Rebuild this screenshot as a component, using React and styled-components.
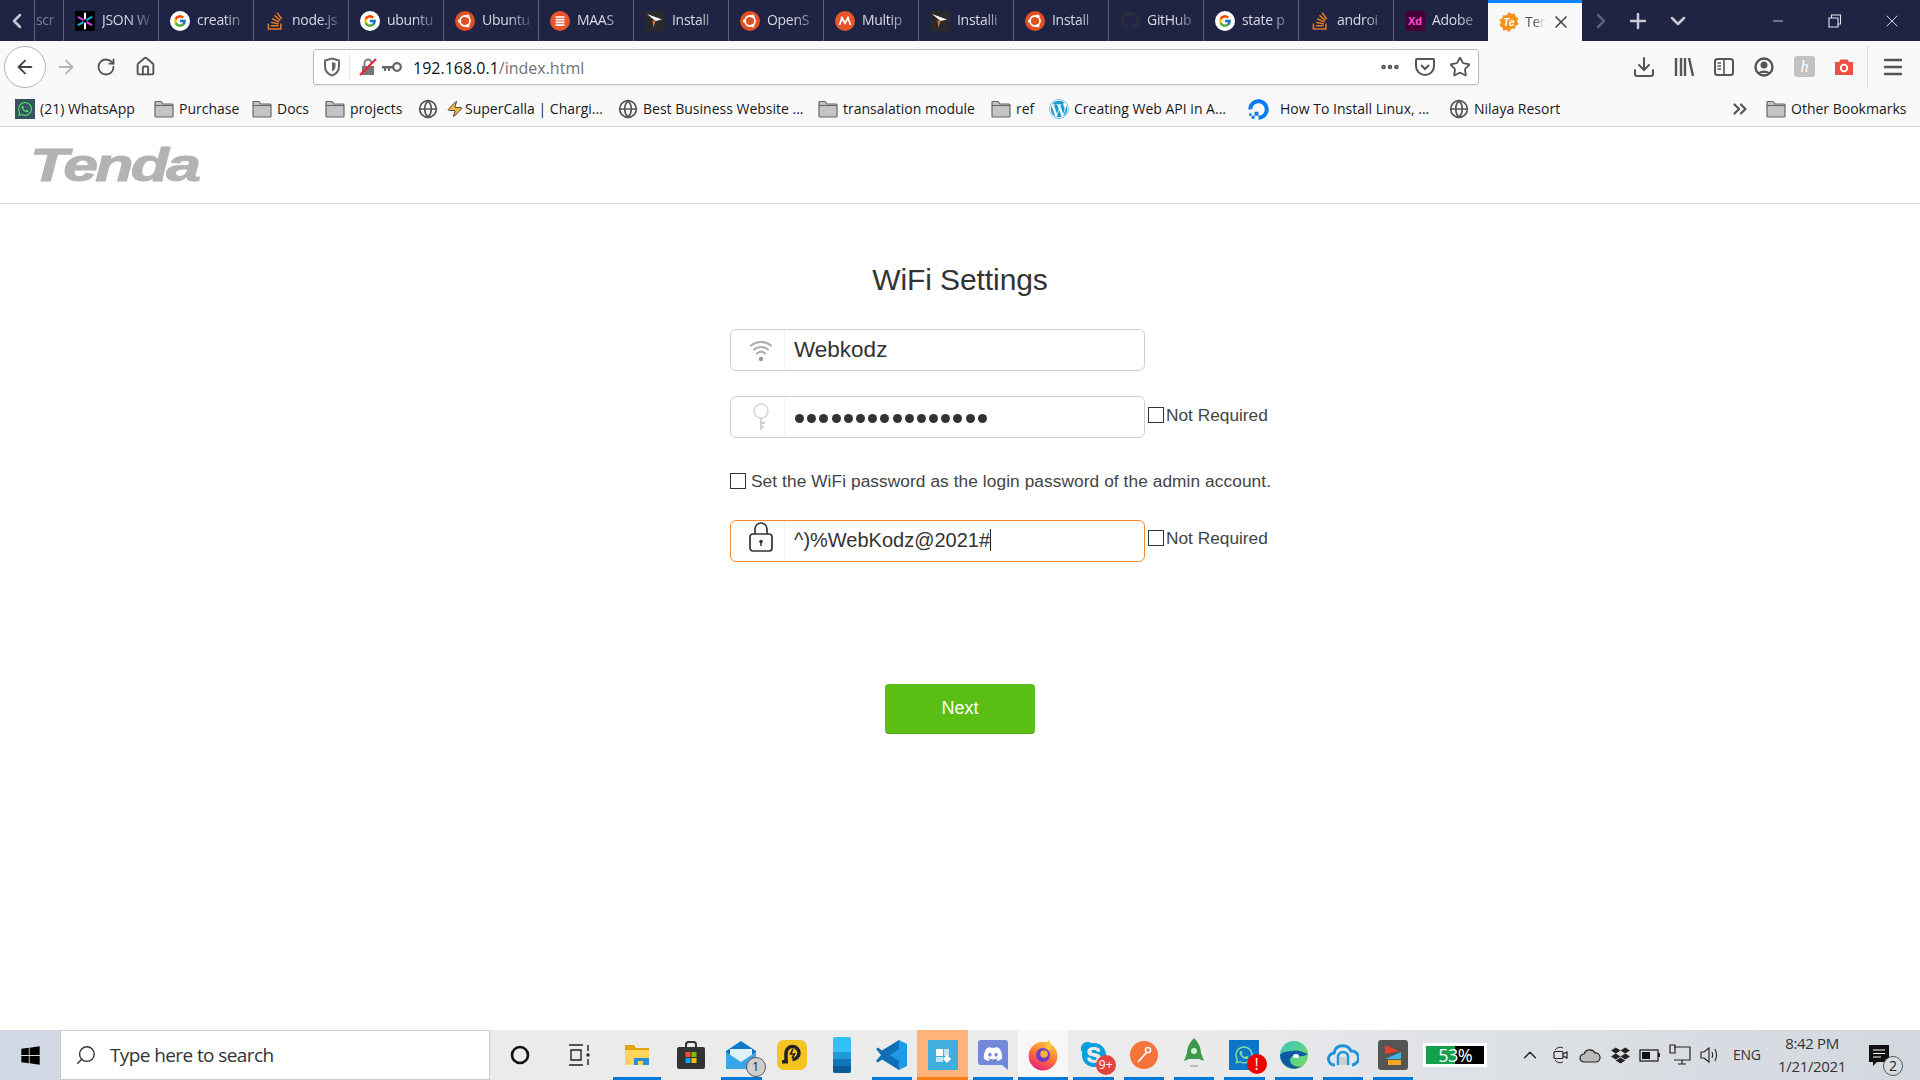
import React from 'react'
import styled, { createGlobalStyle } from 'styled-components'
import {
  ArrowLeft, ArrowRight, RotateCw, House, Star, Download, Menu, Plus, X, Minus,
  ChevronLeft, ChevronRight, ChevronDown, ChevronUp, ChevronsRight, Globe, Search, Ellipsis, Zap,
} from 'lucide-react'
import { FcGoogle } from 'react-icons/fc'
import { FaStackOverflow, FaGithub, FaWhatsapp, FaWordpress, FaDigitalOcean, FaWindows, FaDiscord, FaSkype, FaDropbox } from 'react-icons/fa'

const GlobalStyle = createGlobalStyle`
  html, body { margin: 0; padding: 0; background: #fff; overflow: hidden; }
  * { box-sizing: border-box; }
  #root { width: 1920px; height: 1080px; }
`

const ui = `"Open Sans", "Noto Sans", sans-serif`

const Screen = styled.div`
  width: 1920px;
  height: 1080px;
  display: flex;
  flex-direction: column;
  font-family: "Liberation Sans", Arial, sans-serif;
`

/* tab strip */
const TabStrip = styled.div`
  height: 41px;
  background: #1f2344;
  display: flex;
  align-items: stretch;
  flex-shrink: 0;
`
const StripButton = styled.div`
  width: ${p => p.$w}px;
  flex-shrink: 0;
  display: flex;
  align-items: center;
  justify-content: center;
  color: ${p => p.$color || '#c8c9d2'};
`
const Tab = styled.div`
  width: ${p => p.$w || 95}px;
  flex-shrink: 0;
  border-left: 1px solid #5d6078;
  padding-left: ${p => p.$pl ?? 11}px;
  display: flex;
  align-items: center;
  gap: 7px;
`
const TabText = styled.span`
  font: 14px/1.3 ${ui};
  letter-spacing: -0.3px;
  color: #d9dae2;
  white-space: nowrap;
  width: ${p => p.$w || 54}px;
  opacity: ${p => p.$dim || 1};
  -webkit-mask-image: linear-gradient(to right, #000 50%, rgba(0,0,0,0.15) 92%);
  mask-image: linear-gradient(to right, #000 50%, rgba(0,0,0,0.15) 92%);
`
const ActiveTab = styled.div`
  width: 94px;
  flex-shrink: 0;
  background: #f9f9fa;
  border-top: 3px solid #0a84ff;
  padding: 0 7px 0 11px;
  display: flex;
  align-items: center;
  gap: 6px;
`
const ActiveText = styled(TabText)`
  color: #555;
`
const WindowControls = styled.div`
  margin-left: auto;
  display: flex;
  align-items: stretch;
`
const WindowButton = styled.div`
  width: 57px;
  display: flex;
  align-items: center;
  justify-content: center;
  color: #e8e8ee;
`

/* nav bar */
const NavBar = styled.div`
  height: 51px;
  background: #f9f9fa;
  display: flex;
  align-items: center;
  flex-shrink: 0;
  padding-left: 4px;
`
const BackCircle = styled.div`
  width: 42px;
  height: 42px;
  border-radius: 50%;
  background: #fff;
  border: 1px solid #b4b4b4;
  display: flex;
  align-items: center;
  justify-content: center;
  color: #444;
  flex-shrink: 0;
`
const NavButton = styled.div`
  width: ${p => p.$w || 40}px;
  height: 36px;
  flex-shrink: 0;
  display: flex;
  align-items: center;
  justify-content: center;
  color: ${p => p.$color || '#555'};
`
const UrlBar = styled.div`
  width: 1166px;
  height: 36px;
  margin-left: ${p => p.$ml}px;
  background: #fff;
  border: 1px solid #bdbdbd;
  border-radius: 3px;
  box-shadow: 0 1px 2px rgba(0,0,0,0.08);
  display: flex;
  align-items: center;
  flex-shrink: 0;
`
const UrlSection = styled.div`
  width: 36px;
  height: 26px;
  border-right: 1px solid #e6e6e6;
  display: flex;
  align-items: center;
  justify-content: center;
  flex-shrink: 0;
`
const UrlIcons = styled.div`
  display: flex;
  align-items: center;
  gap: 5px;
  padding-left: 9px;
  width: 63px;
  flex-shrink: 0;
`
const UrlText = styled.div`
  font: 16px/1 ${ui};
  color: #737373;
  margin-top: 2px;
  flex: 1;
  b { font-weight: 400; color: #111; }
`
const UrlActions = styled.div`
  display: flex;
  align-items: center;
  padding-right: 1px;
`
const UrlAction = styled.div`
  width: 35px;
  display: flex;
  align-items: center;
  justify-content: center;
  color: #555;
`
const ToolGroup = styled.div`
  display: flex;
  align-items: center;
  margin-left: 145px;
`
const ToolDivider = styled.div`
  width: 1px;
  height: 42px;
  background: #e0e0e0;
  margin: 0 6px 0 3px;
`

/* bookmarks */
const BookmarksBar = styled.div`
  height: 35px;
  background: #f9f9fa;
  border-bottom: 1px solid #d8d8d8;
  display: flex;
  align-items: center;
  padding-left: 15px;
  flex-shrink: 0;
`
const Bookmark = styled.div`
  width: ${p => p.$w}px;
  flex-shrink: 0;
  display: flex;
  align-items: center;
  gap: ${p => p.$gap ?? 5}px;
  font: 14px/1 ${ui};
  color: #1a1a1a;
  white-space: nowrap;
`
const WhatsSquare = styled.div`
  width: 20px;
  height: 20px;
  background: #36535f;
  display: flex;
  align-items: center;
  justify-content: center;
  color: #4fdc6c;
`
const BookmarksEnd = styled.div`
  margin-left: auto;
  display: flex;
  align-items: center;
  gap: 15px;
  padding-right: 15px;
  color: #555;
`

/* page */
const Page = styled.div`
  flex: 1;
  background: #fff;
  display: flex;
  flex-direction: column;
`
const PageHeader = styled.div`
  height: 77px;
  border-bottom: 1px solid #dcdcdc;
  padding: 14px 0 0 30px;
  flex-shrink: 0;
`
const Logo = styled.div`
  font: italic 700 47px/48px "Liberation Sans", Arial, sans-serif;
  color: #b3b3b3;
  -webkit-text-stroke: 1px #b3b3b3;
  letter-spacing: -2px;
  transform: scaleX(1.33);
  transform-origin: left center;
  width: 130px;
`
const Form = styled.div`
  width: 460px;
  margin-left: 730px;
  display: flex;
  flex-direction: column;
`
const Title = styled.h1`
  margin: 56px 0 29px;
  font-size: 30px;
  line-height: 40px;
  font-weight: 400;
  letter-spacing: -0.1px;
  color: #333;
  text-align: center;
`
const Row = styled.div`
  display: flex;
  align-items: flex-start;
  margin-bottom: ${p => p.$mb || 0}px;
`
const InputBox = styled.div`
  width: 415px;
  height: 42px;
  flex-shrink: 0;
  border: 1px solid ${p => (p.$focus ? '#f08a2c' : '#cfcfcf')};
  border-radius: 6px;
  background: #fff;
  display: flex;
  align-items: center;
`
const InputIcon = styled.div`
  width: 54px;
  height: 100%;
  flex-shrink: 0;
  padding: 0 0 ${p => p.$pb || 0}px 7px;
  border-right: 1px solid #f1f1f1;
  display: flex;
  align-items: center;
  justify-content: center;
`
const InputValue = styled.div`
  padding: 0 0 ${p => p.$pb || 0}px 9px;
  color: #333;
  font-size: ${p => p.$size}px;
  line-height: 1;
  display: flex;
  align-items: center;
  white-space: nowrap;
`
const Caret = styled.span`
  display: inline-block;
  width: 1px;
  height: 22px;
  background: #222;
`
const Dots = styled.div`
  padding: 3px 0 0 10px;
  display: flex;
  gap: 3.2px;
`
const Dot = styled.span`
  width: 9px;
  height: 9px;
  border-radius: 50%;
  background: #333;
`
const Box = styled.span`
  width: 16px;
  height: 16px;
  border: 1px solid #333;
  background: #fff;
  flex-shrink: 0;
`
const CheckLabel = styled.label`
  display: flex;
  align-items: center;
  margin-left: 3px;
  margin-top: ${p => p.$mt}px;
  gap: 2px;
  font-size: 17.3px;
  line-height: 20px;
  color: #444;
  white-space: nowrap;
`
const AdminRow = styled.label`
  display: flex;
  align-items: center;
  gap: 5px;
  height: 20px;
  margin-bottom: 29px;
  font-size: 17.3px;
  letter-spacing: 0.08px;
  color: #444;
  white-space: nowrap;
`
const NextButton = styled.button`
  width: 150px;
  height: 50px;
  margin: 122px 0 0 155px;
  background: #5abe14;
  border: 0;
  border-bottom: 1px solid #4ea510;
  border-radius: 4px;
  color: #fff;
  font: 18px "Liberation Sans", Arial, sans-serif;
`

/* taskbar */
const Taskbar = styled.div`
  height: 50px;
  flex-shrink: 0;
  background: linear-gradient(to right, #ebebeb 0%, #ebebeb 62%, #dfe2e6 75%, #d3d8df 100%);
  display: flex;
  align-items: stretch;
`
const StartCell = styled.div`
  width: 60px;
  background: #d2d9e4;
  color: #000;
  display: flex;
  align-items: center;
  justify-content: center;
`
const SearchBox = styled.div`
  width: 430px;
  background: #fff;
  border: 1px solid #ccc;
  display: flex;
  align-items: center;
  gap: 13px;
  padding-left: 14px;
  font: 19px/1 ${ui};
  letter-spacing: -0.6px;
  color: #333;
`
const TaskCell = styled.div`
  width: ${p => p.$w || 50.3}px;
  flex-shrink: 0;
  position: relative;
  display: flex;
  align-items: center;
  justify-content: center;
  background: ${p => (p.$state === 'active' ? '#ffb27a' : p.$state === 'hover' ? '#f7f7f7' : 'transparent')};
  &::after {
    content: '';
    display: ${p => (p.$state ? 'block' : 'none')};
    position: absolute;
    bottom: 0;
    height: 3px;
    left: ${p => (p.$state === 'on' ? '5px' : '0')};
    right: ${p => (p.$state === 'on' ? '5px' : '0')};
    background: ${p => (p.$state === 'active' ? '#ff7a14' : '#0078d7')};
  }
`
const Badge = styled.span`
  position: absolute;
  right: ${p => p.$r}px;
  bottom: ${p => p.$b}px;
  width: ${p => p.$s}px;
  height: ${p => p.$s}px;
  border-radius: 50%;
  background: ${p => p.$bg};
  color: ${p => p.$fg || '#fff'};
  border: ${p => p.$border || 'none'};
  font: ${p => p.$fs || 12}px/1 ${ui};
  display: flex;
  align-items: center;
  justify-content: center;
`
const Meter = styled.div`
  width: 64px;
  height: 24px;
  margin: 13px 0 0 5px;
  border: 3px solid #fff;
  background: linear-gradient(to right, #17a04c 0 50%, #000 50% 100%);
  color: #fff;
  font: 18px/18px ${ui};
  letter-spacing: -0.5px;
  text-align: center;
  flex-shrink: 0;
`
const Tray = styled.div`
  margin-left: auto;
  padding-right: 15px;
  display: flex;
  align-items: center;
  color: #333;
`
const TrayIcon = styled.div`
  width: 30px;
  display: flex;
  justify-content: center;
  color: #222;
`
const Lang = styled.div`
  font: 14px/1 ${ui};
  letter-spacing: -0.3px;
  width: 30px;
  margin-left: 8px;
  color: #333;
  white-space: nowrap;
`
const Clock = styled.div`
  width: 82px;
  margin-left: 8px;
  font: 15px/23px ${ui};
  letter-spacing: -0.35px;
  text-align: center;
  color: #333;
`
const Notify = styled.div`
  width: 52px;
  height: 100%;
  position: relative;
  display: flex;
  align-items: center;
  justify-content: center;
`

const Svg = ({ s = 20, w, h, v = '0 0 24 24', children }) => (
  <svg width={w || s} height={h || s} viewBox={v} style={{ display: 'block', flexShrink: 0 }}>{children}</svg>
)

const FolderIcon = () => (
  <Svg s={20} v="0 0 20 20">
    <path d="M1 5V3.5A1 1 0 0 1 2 2.5h5l2 2.5h9a1 1 0 0 1 1 1V17a1 1 0 0 1-1 1H2a1 1 0 0 1-1-1z" fill="#c4c4c4" stroke="#666" strokeWidth="1.2" />
    <path d="M1 6.5h18" stroke="#666" strokeWidth="1.1" />
  </Svg>
)

const Favicons = {
  jwt: (
    <Svg v="0 0 20 20">
      <rect width="20" height="20" fill="#000" />
      <g strokeWidth="2" strokeLinecap="round">
        <path d="M10 2.5V7.5M10 12.5v5" stroke="#fff" />
        <path d="M3.5 6.2l4.3 2.5M12.2 11.3l4.3 2.5" stroke="#d63aff" />
        <path d="M3.5 13.8l4.3-2.5M12.2 8.7l4.3-2.5" stroke="#00b9f1" />
      </g>
    </Svg>
  ),
  g: (
    <Svg v="0 0 20 20">
      <circle cx="10" cy="10" r="10" fill="#fff" />
      <foreignObject x="3" y="3" width="14" height="14"><FcGoogle size={14} /></foreignObject>
    </Svg>
  ),
  so: <FaStackOverflow size={20} color="#e07a1f" />,
  ubuntu: (
    <Svg v="0 0 20 20">
      <circle cx="10" cy="10" r="10" fill="#e2501f" />
      <circle cx="10" cy="10" r="5" fill="none" stroke="#fff" strokeWidth="1.8" />
      <circle cx="4.6" cy="10" r="1.7" fill="#fff" /><circle cx="12.8" cy="5.3" r="1.7" fill="#fff" /><circle cx="12.8" cy="14.7" r="1.7" fill="#fff" />
    </Svg>
  ),
  maas: (
    <Svg v="0 0 20 20">
      <circle cx="10" cy="10" r="10" fill="#e9542b" />
      <path d="M5.5 6h9M5.5 8.7h9M5.5 11.4h9M5.5 14.1h9" stroke="#fff" strokeWidth="1.7" />
    </Svg>
  ),
  arrow: (
    <Svg v="0 0 20 20">
      <rect width="20" height="20" fill="#2a2a2a" />
      <path d="M2 3l15 5.5-6.5 1.5z" fill="#fff" />
      <path d="M10.5 10l-2 7-1-7.5z" fill="#e8742c" />
    </Svg>
  ),
  multi: (
    <Svg v="0 0 20 20">
      <circle cx="10" cy="10" r="10" fill="#e9542b" />
      <path d="M4.5 14L7 7l3 5 3-5 2.500 7" fill="none" stroke="#fff" strokeWidth="1.800" />
      <circle cx="7" cy="7" r="1.300" fill="#fff" /><circle cx="13" cy="7" r="1.300" fill="#fff" />
    </Svg>
  ),
  gh: <FaGithub size={20} color="#2a2d3e" />,
  xd: (
    <Svg v="0 0 20 20">
      <rect width="20" height="20" rx="2" fill="#470137" />
      <text x="10" y="14" textAnchor="middle" fontFamily="Liberation Sans" fontSize="11" fontWeight="700" fill="#ff4fd8">Xd</text>
    </Svg>
  ),
}

const tabs = [
  ['jwt', 'JSON W'], ['g', 'creatin'], ['so', 'node.js'], ['g', 'ubuntu'], ['ubuntu', 'Ubuntu'],
  ['maas', 'MAAS'], ['arrow', 'Install'], ['ubuntu', 'OpenS'], ['multi', 'Multip'], ['arrow', 'Installi'],
  ['ubuntu', 'Install'], ['gh', 'GitHub'], ['g', 'state p'], ['so', 'androi'], ['xd', 'Adobe'],
]

const Wifi = () => (
  <Svg s={28} v="0 0 28 28">
    <g fill="none" stroke="#aaa" strokeWidth="2" strokeLinecap="round">
      <path d="M4 9.500c5.800-4.800 14.200-4.800 20 0" />
      <path d="M7 13.500c4-3.300 10-3.300 14 0" />
      <path d="M10 17.500c2.500-2.100 5.500-2.100 8 0" />
    </g>
    <circle cx="14" cy="23" r="2.200" fill="#999" />
  </Svg>
)
const KeyOutline = () => (
  <Svg w={20} h={30} v="0 0 20 30">
    <circle cx="10" cy="9" r="7" fill="none" stroke="#d6d6d6" strokeWidth="1.6" />
    <path d="M10 16v12M10 21h4M10 25h3" stroke="#d0d0d0" strokeWidth="1.8" fill="none" />
  </Svg>
)
const LockIcon = () => (
  <Svg w={24} h={30} v="0 0 24 30">
    <rect x="1" y="12" width="22" height="17" rx="3" fill="#fafafa" stroke="#333" strokeWidth="1.7" />
    <path d="M6 12V7a6 6 0 0 1 12 0v5" fill="none" stroke="#333" strokeWidth="1.7" />
    <circle cx="12" cy="19.500" r="1.800" fill="#333" /><path d="M12 20v4" stroke="#333" strokeWidth="1.500" />
  </Svg>
)

const taskIcons = {
  explorer: (
    <Svg s={28} v="0 0 28 28">
      <path d="M2 4h9l2 3h13v17H2z" fill="#e5a50a" /><rect x="2" y="9" width="24" height="15" fill="#ffd45c" />
      <rect x="11" y="17" width="15" height="7" fill="#2a8fd8" /><rect x="15" y="20" width="5" height="4" fill="#ffd45c" />
    </Svg>
  ),
  store: (
    <Svg s={30} v="0 0 30 30">
      <path d="M10 8V4.500a2.500 2.500 0 0 1 2.500-2.500h5A2.500 2.500 0 0 1 20 4.500V8" fill="none" stroke="#333" strokeWidth="2" />
      <rect x="1" y="7" width="28" height="22" rx="2" fill="#333" />
      <rect x="9.500" y="12" width="5" height="5" fill="#f25022" /><rect x="15.500" y="12" width="5" height="5" fill="#7fba00" />
      <rect x="9.500" y="18" width="5" height="5" fill="#00a4ef" /><rect x="15.500" y="18" width="5" height="5" fill="#ffb900" />
    </Svg>
  ),
  mail: (
    <Svg s={32} v="0 0 32 32">
      <path d="M1 12L16 2l15 10v18H1z" fill="#0f78c9" /><path d="M5 10h22v10l-11 6-11-6z" fill="#dff1fb" />
      <path d="M1 13l15 10 15-10v17H1z" fill="#3aa6e8" />
    </Svg>
  ),
  ld: (
    <Svg s={30} v="0 0 30 30">
      <rect width="30" height="30" rx="7" fill="#f4c31f" />
      <path d="M9 23V13a6.500 6.500 0 1 1 6.500 6.500" fill="none" stroke="#222" strokeWidth="3.500" />
      <path d="M16 9l-2.500 5h4l-2.500 4" fill="none" stroke="#222" strokeWidth="1.600" />
      <rect x="5" y="20" width="6" height="3.500" fill="#222" />
    </Svg>
  ),
  phone: (
    <Svg w={20} h={36} v="0 0 20 36">
      <rect x="1" y="0" width="18" height="36" rx="2" fill="#33c1f3" />
      <rect x="1" y="15" width="18" height="7" fill="#1e9ad6" /><rect x="1" y="22" width="18" height="7" fill="#1177b8" />
      <path d="M1 29h18v5a2 2 0 0 1-2 2H3a2 2 0 0 1-2-2z" fill="#0d5a96" />
    </Svg>
  ),
  vscode: (
    <Svg s={32} v="0 0 32 32">
      <path d="M23 1l8 4v22l-8 4L9 17z" fill="#1e9be8" />
      <path d="M23 1v9l-9 6 9 6v9L6 20.500 2 23.500 0 22l5-6-5-6 2-1.500 4 3z" fill="#0e6fb5" />
    </Svg>
  ),
  app: (
    <Svg s={30} v="0 0 30 30">
      <rect width="30" height="30" fill="#41afde" />
      <rect x="8" y="9" width="7" height="7" fill="#fff" /><rect x="16" y="9" width="5" height="7" fill="#bfe6f7" />
      <rect x="8" y="17" width="7" height="5" fill="#bfe6f7" /><path d="M19 15l4 4-4 4-4-4z" fill="#fff" />
    </Svg>
  ),
  discord: (
    <Svg s={30} v="0 0 30 30">
      <path d="M3 0h24a3 3 0 0 1 3 3v27l-6-5H3a3 3 0 0 1-3-3V3a3 3 0 0 1 3-3z" fill="#7289da" />
      <foreignObject x="5" y="4" width="20" height="18"><FaDiscord size={20} color="#fff" /></foreignObject>
    </Svg>
  ),
  firefox: (
    <Svg s={32} v="0 0 30 30">
      <defs><linearGradient id="ffx" x1="0.700" y1="0" x2="0.200" y2="1"><stop offset="0" stopColor="#ffc53d" /><stop offset="0.500" stopColor="#ff7139" /><stop offset="1" stopColor="#e31587" /></linearGradient></defs>
      <circle cx="15" cy="16" r="13.500" fill="url(#ffx)" />
      <path d="M20 1c3 4 3 6 2 9l-7 1z" fill="#ffc53d" />
      <circle cx="15" cy="15" r="6.500" fill="#6a3fc4" /><circle cx="16" cy="14" r="3.500" fill="#fbb03b" />
    </Svg>
  ),
  skype: <FaSkype size={30} color="#0a9ee0" />,
  postman: (
    <Svg s={28} v="0 0 28 28">
      <circle cx="14" cy="14" r="14" fill="#f4743b" />
      <path d="M8 21l9-10" stroke="#fff" strokeWidth="1.800" /><circle cx="18" cy="9" r="2.600" fill="none" stroke="#fff" strokeWidth="1.500" />
    </Svg>
  ),
  rocket: (
    <Svg w={24} h={34} v="0 0 24 34">
      <path d="M12 0c5 5 7 10 7 15l3 8-5-2H7l-5 2 3-8c0-5 2-10 7-15z" fill="#3d9a4a" />
      <circle cx="12" cy="13" r="3" fill="#d4ecd8" /><rect x="8" y="27" width="8" height="2" fill="#bbb" />
    </Svg>
  ),
  whatsapp: (
    <Svg s={30} v="0 0 30 30">
      <rect width="30" height="30" fill="#0e76c9" />
      <foreignObject x="5" y="5" width="20" height="20"><FaWhatsapp size={20} color="#7fe39a" /></foreignObject>
    </Svg>
  ),
  edge: (
    <Svg s={30} v="0 0 30 30">
      <defs><linearGradient id="edg" x1="0" y1="0" x2="1" y2="1"><stop offset="0" stopColor="#36c5c0" /><stop offset="1" stopColor="#7ed957" /></linearGradient></defs>
      <circle cx="15" cy="15" r="14" fill="url(#edg)" />
      <path d="M1 15a14 14 0 0 0 22 11c-6 2-12-1-12-6 0-3 3-5 6-4 3 0 8 1 12-2-2 0-9-5-15-3-6 0-11 1-13 4z" fill="#0c59a4" />
      <ellipse cx="17" cy="16" rx="3" ry="2" fill="#fff" />
    </Svg>
  ),
  cloud: (
    <Svg s={32} v="0 0 32 32">
      <path d="M8 26a6 6 0 0 1-1-12 9 9 0 0 1 17-2 7 7 0 0 1 1 14" fill="none" stroke="#1d93dc" strokeWidth="3" />
      <path d="M11 26V18a5 5 0 0 1 10 0v8" fill="none" stroke="#1d93dc" strokeWidth="2.500" /><rect x="13" y="18" width="6" height="8" fill="#cfcfcf" />
    </Svg>
  ),
  prism: (
    <Svg s={30} v="0 0 30 30">
      <rect width="30" height="30" rx="3" fill="#555" />
      <path d="M7 5l14 6-14 3z" fill="#e8412c" /><path d="M23 12L7 19h16z" fill="#3fb6e4" /><rect x="10" y="20" width="13" height="5" fill="#f5a623" />
    </Svg>
  ),
}

const bookmarks = [
  { w: 139, icon: <WhatsSquare><FaWhatsapp size={16} /></WhatsSquare>, text: '(21) WhatsApp' },
  { w: 98, icon: <FolderIcon />, text: 'Purchase' },
  { w: 73, icon: <FolderIcon />, text: 'Docs' },
  { w: 93, icon: <FolderIcon />, text: 'projects' },
  { w: 200, icon: <><Globe size={20} color="#555" /><Zap size={18} fill="#f6b73c" color="#333" strokeWidth={1.2} style={{ marginLeft: 3, marginRight: -4 }} /></>, text: 'SuperCalla | Chargi...' },
  { w: 200, icon: <Globe size={20} color="#555" />, text: 'Best Business Website ...' },
  { w: 173, icon: <FolderIcon />, text: 'transalation module' },
  { w: 58, icon: <FolderIcon />, text: 'ref' },
  { w: 199, icon: <FaWordpress size={20} color="#1e9cd1" />, text: 'Creating Web API in A...' },
  { w: 201, icon: <FaDigitalOcean size={21} color="#0a7cf2" />, gap: 11, text: 'How To Install Linux, ...' },
  { w: 120, icon: <Globe size={20} color="#555" />, text: 'Nilaya Resort' },
]

const App = () => (
  <Screen>
    <GlobalStyle />
    <TabStrip>
      <StripButton $w={34}><ChevronLeft size={24} strokeWidth={2.5} color="#c8c9d2" /></StripButton>
      <Tab $w={29} $pl={1}><TabText $w={26} $dim={0.5}>scr</TabText></Tab>
      {tabs.map(([icon, text], i) => (
        <Tab key={i}>
          {Favicons[icon]}
          <TabText>{text}</TabText>
        </Tab>
      ))}
      <ActiveTab>
        <Svg v="0 0 20 20">
          <path d="M10 0l2.600 2 3.200-.5.900 3.100 2.800 1.700-1.300 3 1.300 3-2.800 1.700-.9 3.100-3.200-.5L10 20l-2.600-2-3.200.5-.900-3.100L.5 13.700l1.300-3-1.300-3 2.800-1.700.9-3.100 3.200.5z" fill="#f5921e" />
          <text x="10" y="14" textAnchor="middle" fontFamily="Liberation Sans" fontStyle="italic" fontWeight="700" fontSize="10" fill="#fff">Te</text>
        </Svg>
        <ActiveText $w={20}>Ter</ActiveText>
        <X size={20} color="#444" strokeWidth={2} />
      </ActiveTab>
      <StripButton $w={38}><ChevronRight size={24} strokeWidth={2.5} color="#5e6079" /></StripButton>
      <StripButton $w={36}><Plus size={24} strokeWidth={2.5} /></StripButton>
      <StripButton $w={44}><ChevronDown size={24} strokeWidth={2.5} /></StripButton>
      <WindowControls>
        <WindowButton><Minus size={16} strokeWidth={1.2} /></WindowButton>
        <WindowButton>
          <Svg s={14} v="0 0 14 14">
            <path d="M3.500 3.500V1h9v9H10M1 4h9v9H1z" fill="none" stroke="#e8e8ee" strokeWidth="1.100" />
          </Svg>
        </WindowButton>
        <WindowButton><X size={20} strokeWidth={1.1} /></WindowButton>
      </WindowControls>
    </TabStrip>

    <NavBar>
      <BackCircle><ArrowLeft size={22} strokeWidth={2} /></BackCircle>
      <NavButton $w={40} $color="#b4b4b4"><ArrowRight size={22} strokeWidth={2} /></NavButton>
      <NavButton $w={40}><RotateCw size={20} strokeWidth={2.2} /></NavButton>
      <NavButton $w={38}><House size={21} strokeWidth={2.2} /></NavButton>
      <UrlBar $ml={149}>
        <UrlSection>
          <Svg s={20} v="0 0 20 20">
            <path d="M10 1.500l7 2v6c0 4.500-3 7.500-7 9-4-1.500-7-4.500-7-9v-6z" fill="none" stroke="#666" strokeWidth="2" />
            <path d="M10 5l3.500 1v3.500c0 2.500-1.500 4-3.500 5z" fill="#666" />
          </Svg>
        </UrlSection>
        <UrlIcons>
          <Svg s={18} v="0 0 18 18">
            <path d="M3 8h12v9H3z" fill="#777" /><path d="M5.500 8V5a3.500 3.500 0 0 1 7 0" fill="none" stroke="#777" strokeWidth="1.800" />
            <path d="M1 17L17 1" stroke="#ee1d3c" strokeWidth="2.200" />
          </Svg>
          <Svg w={20} h={12} v="0 0 20 12">
            <circle cx="15" cy="6" r="3.800" fill="none" stroke="#666" strokeWidth="2.200" />
            <path d="M0 5h11v2.500H8V10H6V7.500H4V10H2V7.500H0z" fill="#666" />
          </Svg>
        </UrlIcons>
        <UrlText><b>192.168.0.1</b>/index.html</UrlText>
        <UrlActions>
          <UrlAction><Ellipsis size={22} strokeWidth={3} /></UrlAction>
          <UrlAction>
            <Svg s={22} v="0 0 22 22">
              <path d="M3 3h16a1 1 0 0 1 1 1v6c0 5-4 9-9 9s-9-4-9-9V4a1 1 0 0 1 1-1z" fill="none" stroke="#555" strokeWidth="2" />
              <path d="M7 9l4 4 4-4" fill="none" stroke="#555" strokeWidth="2" />
            </Svg>
          </UrlAction>
          <UrlAction><Star size={22} strokeWidth={2} /></UrlAction>
        </UrlActions>
      </UrlBar>
      <ToolGroup>
        <NavButton><Download size={24} strokeWidth={2} /></NavButton>
        <NavButton>
          <Svg s={22} v="0 0 22 22">
            <path d="M3 2v18M8 2v18M12 2v18M16 2l4 18" fill="none" stroke="#555" strokeWidth="2.400" />
          </Svg>
        </NavButton>
        <NavButton>
          <Svg s={22} v="0 0 22 22">
            <rect x="2" y="3" width="18" height="16" rx="2.500" fill="none" stroke="#555" strokeWidth="2" />
            <path d="M11 3v16M4.500 7H8M4.500 10H8M4.500 13H8" stroke="#555" strokeWidth="1.600" />
          </Svg>
        </NavButton>
        <NavButton>
          <Svg s={22} v="0 0 22 22">
            <circle cx="11" cy="11" r="8.500" fill="none" stroke="#555" strokeWidth="2.400" />
            <circle cx="11" cy="9" r="3.500" fill="#555" /><path d="M5 17c2-3.500 10-3.500 12 0z" fill="#555" />
          </Svg>
        </NavButton>
        <NavButton>
          <Svg s={21} v="0 0 21 21">
            <rect width="21" height="21" rx="3" fill="#c2c2c2" />
            <text x="10.500" y="16" textAnchor="middle" fontFamily="Liberation Serif" fontStyle="italic" fontSize="16" fill="#fff">h</text>
          </Svg>
        </NavButton>
        <NavButton>
          <Svg s={20} v="0 0 20 20">
            <path d="M1 5h4l1.500-2.500h7L15 5h4v13H1z" fill="#ee4f45" />
            <circle cx="10" cy="11" r="3.300" fill="none" stroke="#fff" strokeWidth="1.800" />
          </Svg>
        </NavButton>
        <ToolDivider />
        <NavButton $w={38}><Menu size={24} strokeWidth={2.4} /></NavButton>
      </ToolGroup>
    </NavBar>

    <BookmarksBar>
      {bookmarks.map((b, i) => (
        <Bookmark key={i} $w={b.w} $gap={b.gap}>{b.icon}{b.text}</Bookmark>
      ))}
      <BookmarksEnd>
        <ChevronsRight size={22} strokeWidth={2.4} />
        <Bookmark $w={139}><FolderIcon />Other Bookmarks</Bookmark>
      </BookmarksEnd>
    </BookmarksBar>

    <Page>
      <PageHeader><Logo>Tenda</Logo></PageHeader>
      <Form>
        <Title>WiFi Settings</Title>
        <Row $mb={25}>
          <InputBox>
            <InputIcon><Wifi /></InputIcon>
            <InputValue $size={22.5}>Webkodz</InputValue>
          </InputBox>
        </Row>
        <Row $mb={33}>
          <InputBox>
            <InputIcon><KeyOutline /></InputIcon>
            <Dots>{Array.from({ length: 16 }).map((_, i) => <Dot key={i} />)}</Dots>
          </InputBox>
          <CheckLabel $mt={9}><Box />Not Required</CheckLabel>
        </Row>
        <AdminRow><Box />Set the WiFi password as the login password of the admin account.</AdminRow>
        <Row>
          <InputBox $focus>
            <InputIcon $pb={9}><LockIcon /></InputIcon>
            <InputValue $size={20} $pb={2}>^)%WebKodz@2021#<Caret /></InputValue>
          </InputBox>
          <CheckLabel $mt={8}><Box />Not Required</CheckLabel>
        </Row>
        <NextButton>Next</NextButton>
      </Form>
    </Page>

    <Taskbar>
      <StartCell><FaWindows size={21} /></StartCell>
      <SearchBox><Search size={22} strokeWidth={1.5} style={{ transform: 'scaleX(-1)' }} />Type here to search</SearchBox>
      <TaskCell $w={60}>
        <Svg s={20} v="0 0 20 20"><circle cx="10" cy="10" r="8" fill="none" stroke="#111" strokeWidth="2.600" /></Svg>
      </TaskCell>
      <TaskCell $w={58}>
        <Svg w={22} h={22} v="0 0 22 22">
          <path d="M1 1h14M1 21h14M3 6h10v10H3zM20 1v6M20 15v6" fill="none" stroke="#222" strokeWidth="1.400" /><rect x="18.500" y="9.500" width="3" height="3" fill="#222" />
        </Svg>
      </TaskCell>
      <TaskCell $w={58} $state="on">{taskIcons.explorer}</TaskCell>
      <TaskCell>{taskIcons.store}</TaskCell>
      <TaskCell $state="on">{taskIcons.mail}<Badge $r={1} $b={3} $s={20} $bg="#cfcfcf" $fg="#222" $border="1px solid #555">1</Badge></TaskCell>
      <TaskCell>{taskIcons.ld}</TaskCell>
      <TaskCell>{taskIcons.phone}</TaskCell>
      <TaskCell $state="on">{taskIcons.vscode}</TaskCell>
      <TaskCell $state="active">{taskIcons.app}</TaskCell>
      <TaskCell $state="on">{taskIcons.discord}</TaskCell>
      <TaskCell $state="hover">{taskIcons.firefox}</TaskCell>
      <TaskCell $state="on">{taskIcons.skype}<Badge $r={3} $b={5} $s={20} $bg="#e2433a" $fs={12}>9+</Badge></TaskCell>
      <TaskCell $state="on">{taskIcons.postman}</TaskCell>
      <TaskCell $state="on">{taskIcons.rocket}</TaskCell>
      <TaskCell $state="on">{taskIcons.whatsapp}<Badge $r={3} $b={6} $s={20} $bg="#f00000" $fs={16}>!</Badge></TaskCell>
      <TaskCell $w={48} $state="on">{taskIcons.edge}</TaskCell>
      <TaskCell $state="on">{taskIcons.cloud}</TaskCell>
      <TaskCell $state="on">{taskIcons.prism}</TaskCell>
      <Meter>53%</Meter>
      <Tray>
        <TrayIcon><ChevronUp size={22} strokeWidth={1.5} /></TrayIcon>
        <TrayIcon>
          <Svg s={20} v="0 0 20 20">
            <path d="M5 5a6 6 0 0 1 8-2M5 15a6 6 0 0 0 8 2" fill="none" stroke="#222" strokeWidth="1" />
            <rect x="4" y="6.500" width="9" height="7" rx="1" fill="none" stroke="#222" strokeWidth="1.200" /><path d="M13 9l4-2v6l-4-2" fill="none" stroke="#222" strokeWidth="1.200" />
          </Svg>
        </TrayIcon>
        <TrayIcon>
          <Svg w={22} h={16} v="0 0 22 16">
            <path d="M5 15a4 4 0 0 1 0-8 6 6 0 0 1 11-1 4.500 4.500 0 0 1 1 9z" fill="#bbb" stroke="#222" strokeWidth="1.200" />
          </Svg>
        </TrayIcon>
        <TrayIcon><FaDropbox size={19} /></TrayIcon>
        <TrayIcon>
          <Svg w={22} h={14} v="0 0 22 14">
            <rect x="1" y="2" width="18" height="11" fill="none" stroke="#222" strokeWidth="1.300" /><rect x="3" y="4" width="8" height="7" fill="#111" /><rect x="19" y="5" width="2" height="4" fill="#222" />
          </Svg>
        </TrayIcon>
        <TrayIcon>
          <Svg s={22} v="0 0 22 22">
            <path d="M5 3h16v13H5M13 16v4M9 20h8M1 1h5v8H1z" fill="none" stroke="#222" strokeWidth="1.200" />
          </Svg>
        </TrayIcon>
        <TrayIcon>
          <Svg s={20} v="0 0 20 20">
            <path d="M1 7h3l5-4v14l-5-4H1zM12 7c1 2 1 4 0 6M15 4c2 4 2 8 0 12" fill="none" stroke="#222" strokeWidth="1.100" />
          </Svg>
        </TrayIcon>
        <Lang>ENG</Lang>
        <Clock>8:42 PM<br />1/21/2021</Clock>
        <Notify>
          <Svg s={24} v="0 0 24 24">
            <path d="M2 2h20v17H10l-4 4v-4H2z" fill="#111" /><path d="M6 7h12M6 10.500h12M6 14h8" stroke="#fff" strokeWidth="1.200" />
          </Svg>
          <Badge $r={2} $b={4} $s={20} $bg="#d8dbe0" $fg="#222" $border="1px solid #555" $fs={14}>2</Badge>
        </Notify>
      </Tray>
    </Taskbar>
  </Screen>
)

export default App
